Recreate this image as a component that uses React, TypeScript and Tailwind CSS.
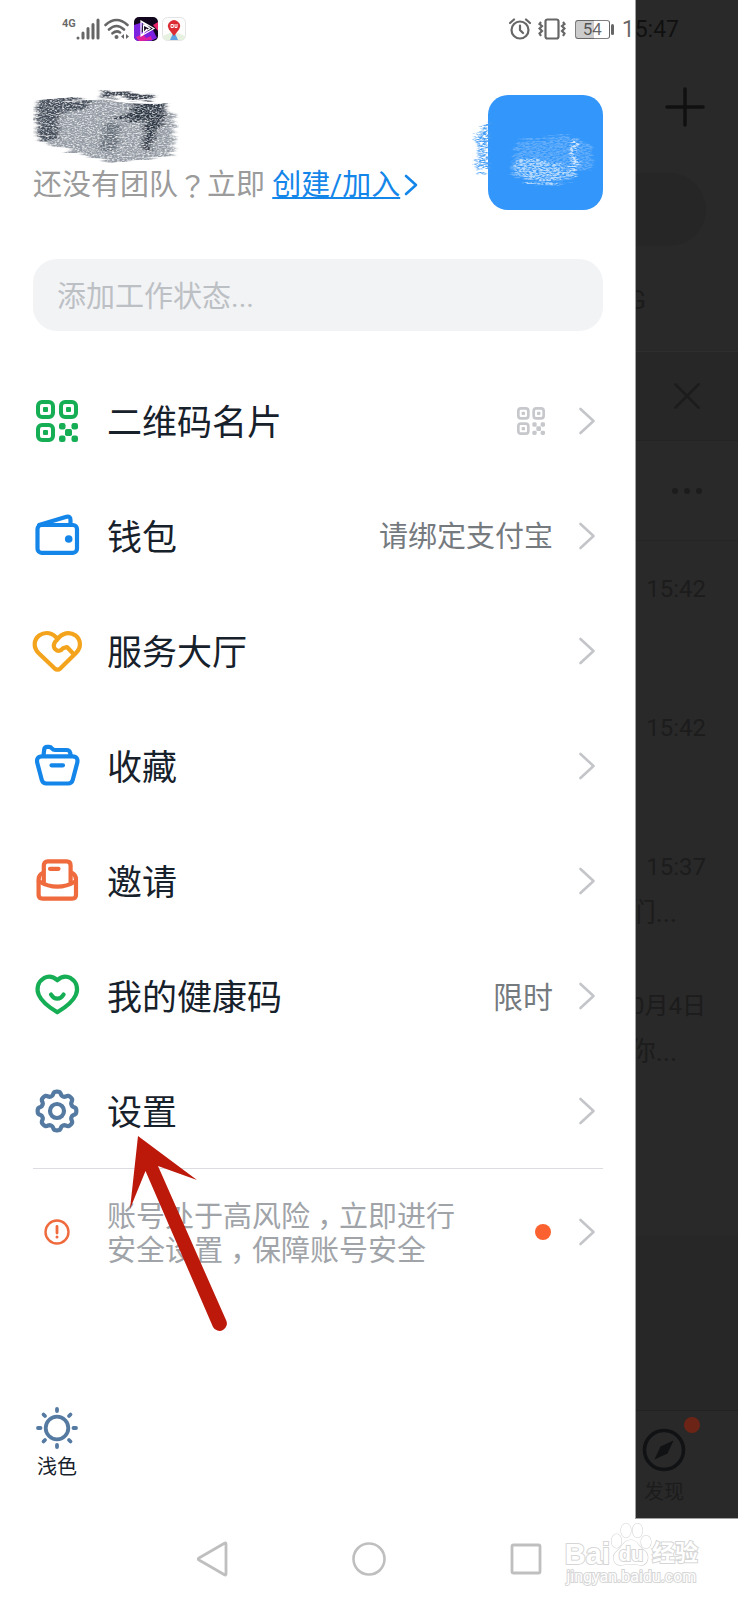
import React from 'react';

type IconProps = { className?: string };

const round = (n: number) => Math.round(n * 100) / 100;

// eight soft teeth around the centre of a 48 box
const gearPath =
  Array.from({ length: 128 }, (_, i) => {
    const a = (i / 128) * Math.PI * 2;
    const r = 17.5 + 1.9 * Math.tanh(1.8 * Math.cos(8 * a) + 0.3);
    return `${i ? 'L' : 'M'}${round(24 + r * Math.cos(a))} ${round(24 + r * Math.sin(a))}`;
  }).join('') + 'Z';

function Line({ className, children }: { className: string; children: React.ReactNode }) {
  return (
    <svg viewBox="0 0 48 48" className={`size-12 shrink-0 overflow-visible ${className}`} fill="none" stroke="currentColor" strokeWidth="4.2" strokeLinecap="round" strokeLinejoin="round">
      {children}
    </svg>
  );
}

function QrIcon({ className }: IconProps) {
  return (
    <svg viewBox="0 0 42 42" className={className} fill="currentColor">
      {[[0, 0], [23, 0], [0, 23]].map(([x, y]) => (
        <g key={`${x}-${y}`}>
          <rect x={x + 2} y={y + 2} width="15" height="15" rx="4" fill="none" stroke="currentColor" strokeWidth="4" />
          <rect x={x + 7} y={y + 7} width="5" height="5" rx="1" />
        </g>
      ))}
      <rect x="23" y="23" width="6.5" height="6.5" rx="2.2" />
      <rect x="35.5" y="23" width="6.5" height="6.5" rx="2.2" />
      <rect x="29" y="29" width="7" height="7" rx="1.8" />
      <rect x="23" y="35.5" width="6.5" height="6.5" rx="2.2" />
      <rect x="35.5" y="35.5" width="6.5" height="6.5" rx="2.2" />
    </svg>
  );
}

function Chevron() {
  return (
    <svg viewBox="0 0 32 32" className="size-8 shrink-0 text-[#c3c5c9]" fill="none" stroke="currentColor" strokeWidth="2.6" strokeLinecap="round" strokeLinejoin="round">
      <path d="M9.5 4 22.5 16 9.5 28" />
    </svg>
  );
}

const items = [
  {
    label: '二维码名片',
    icon: (
      <span className="flex size-12 shrink-0 items-center justify-center">
        <QrIcon className="size-[42px] text-[#16ae55]" />
      </span>
    ),
    extra: <QrIcon className="mr-2 size-7 text-[#c6c8cb]" />,
  },
  {
    label: '钱包',
    icon: (
      <Line className="text-[#1486ea]">
        <rect x="4.5" y="13" width="39.5" height="27.8" rx="4" />
        <path d="M6 13 33.5 4.8Q37.5 4 37.5 8V13" />
        <circle cx="35.7" cy="27" r="3.8" fill="currentColor" stroke="none" />
      </Line>
    ),
    extra: <span className="pt-1 text-[29px] text-[#757a7f]">请绑定支付宝</span>,
  },
  {
    label: '服务大厅',
    icon: (
      <Line className="text-[#f3a41c]">
        <path d="M24.5 12.3C20.5 5.8 12.5 4.2 6.5 8.2C.3 12.8.2 20.5 5.5 26L21.5 41.3Q24.5 43.9 27.5 41.3L43 26C48.5 20.5 48.2 12.8 42.2 8.2C36.5 4.2 29 6 24.5 12.3C20.5 15.5 19.7 19.5 22.3 22.2C25 24.8 28 24 30 21.3L34 20 40.5 27" />
      </Line>
    ),
  },
  {
    label: '收藏',
    icon: (
      <Line className="text-[#1486ea]">
        <path d="M9 14.3H39.5C43.5 14.3 45.2 17 44.2 21L39.7 38Q38.7 41.5 35 41.5H13.5Q9.8 41.5 8.8 38L4.3 21C3.3 17 5 14.3 9 14.3Z" />
        <path d="M10.5 13.5 11.2 7.5Q11.5 4.8 14.2 4.8H16Q17.8 4.8 19 6.4T22 8H33.5Q36.7 8 37.2 11L37.7 13.5M18.5 23.3H30" />
      </Line>
    ),
  },
  {
    label: '邀请',
    icon: (
      <Line className="text-[#ef6a3d]">
        <path d="M10.8 25V8.4Q10.8 4.4 14.8 4.4H33.6Q37.6 4.4 37.6 8.4V25" />
        <path d="M9.5 16Q5.6 18 5.6 22.5V38Q5.6 41.6 9.6 41.6H39.2Q43 41.6 43 38V22.5Q43 18 39 16" />
        <path d="M5.8 24.2Q24.3 35.2 42.8 24.2M17 11.8H25.5" />
      </Line>
    ),
  },
  {
    label: '我的健康码',
    icon: (
      <Line className="text-[#16ae55]">
        <path d="M24.3 8.2C20.3 4.6 15 4 10.8 6.2C4.6 9.8 3.2 17 5.8 23C8.8 29.8 15.5 35 24.3 40.3C33.1 35 39.8 29.8 42.8 23C45.4 17 44 9.8 37.8 6.2C33.6 4 28.3 4.6 24.3 8.2Z" />
        <path d="M18 22.5Q20.5 26.7 24.3 26.7T30.6 22.5" />
      </Line>
    ),
    extra: <span className="pt-1 text-[30px] text-[#757a7f]">限时</span>,
  },
  {
    label: '设置',
    icon: (
      <Line className="text-[#557aa2]">
        <path d={gearPath} />
        <circle cx="24" cy="24" r="7" />
      </Line>
    ),
  },
];

const chats = [
  { time: '15:42' },
  { time: '15:42' },
  { time: '15:37', preview: '们...' },
  { time: '0月4日', preview: '你...' },
  {},
];

// half-width comma centred in a full-width cell
function Comma() {
  return <span className="inline-block w-[29px] text-center [font-feature-settings:'halt']">，</span>;
}

function StatusBar() {
  return (
    <header className="pointer-events-none absolute inset-x-0 top-0 z-10 flex h-[58px] items-center justify-between pl-[62px] pr-[59px] text-black/60">
      <div className="flex items-center">
        <div className="flex items-start">
          <span className="text-[11px] font-bold leading-3">4G</span>
          <svg viewBox="0 0 24 22" className="h-[22px] w-6" stroke="currentColor" strokeWidth="3" strokeLinecap="round">
            <path d="M2 20V20M7 20V15M12 20V10.5M17 20V6.5M22 20V2" />
          </svg>
        </div>
        <svg viewBox="0 0 25 22" className="ml-1 h-[22px] w-[25px]" fill="none" stroke="currentColor" strokeWidth="2.6" strokeLinecap="round">
          <path d="M1.5 7Q12.5-3 23.5 7M5 11.5Q12.5 4.5 20 11.5M8.5 15.3Q12.5 12 16 14.5" />
          <circle cx="12.5" cy="19" r="2" fill="currentColor" stroke="none" />
          <path d="M20 16v5l-3-2.5zM22 16v5l3-2.5z" fill="currentColor" stroke="none" />
        </svg>
        <svg viewBox="0 0 24 24" className="ml-[5px] size-6">
          <rect width="24" height="24" rx="5" fill="#12061f" />
          <path d="M0 8 9 5 7 15 19 13 23 21 17 24H5Q0 24 0 19Z" fill="#7a22e0" />
          <path d="M2 20 9 17 12 21 17 19 18 23 8 24H5Z" fill="#e0219b" />
          <path d="M19 8 24 5V14Z" fill="#e8246a" />
          <path d="M7 4V19L20 11.5ZM9.5 8V15.5L16 11.5ZM7 4 16 11.5M7 19 13 12" fill="none" stroke="#fff" strokeWidth="1.2" />
        </svg>
        <svg viewBox="0 0 24 24" className="ml-1 size-6">
          <rect x=".5" y=".5" width="23" height="23" rx="5" fill="#fdfdfd" stroke="#e2e4e6" />
          <path d="M1 19 10 15 16 16 23 19Q23 23 19 23H5Q1 23 1 19Z" fill="#e6f1df" />
          <path d="M8 23 11.2 16H12.8L16 23Z" fill="#5d9fe0" />
          <path d="M12 19 7 12.5A6 6 0 1 1 17 12.5Z" fill="#dc2c33" />
          <path d="M9 7.5h2.3v3H9zM13 7v3.5h2V7" fill="none" stroke="#fff" />
        </svg>
      </div>
      <div className="flex items-center">
        <svg viewBox="0 0 22 22" className="size-[22px]" fill="none" stroke="currentColor" strokeWidth="2.2" strokeLinecap="round">
          <circle cx="11" cy="12" r="8.5" />
          <path d="M11 7.5V12L14 15M1 5 5 1.5M21 5 17 1.5" />
        </svg>
        <svg viewBox="0 0 28 22" className="ml-[7px] h-[22px] w-7" fill="none" stroke="currentColor" strokeWidth="2.2">
          <rect x="7.5" y="1.5" width="13" height="19" rx="2" />
          <path d="M3 4 1.5 6 4 8 1.5 10.5 4 13 1.5 15.5 3 18M25 4 26.5 6 24 8 26.5 10.5 24 13 26.5 15.5 25 18" />
        </svg>
        <div className="ml-[9px] flex items-center">
          <div className="flex h-[19px] w-[35px] items-center justify-center rounded-[3px] border border-black/50 bg-linear-to-r from-black/20 from-55% to-transparent to-55% text-[17px] leading-none">54</div>
          <span className="ml-px h-[11px] w-[3px] rounded-sm bg-black/60" />
        </div>
        <span className="ml-2 text-[23px] leading-none">15:47</span>
      </div>
    </header>
  );
}

function NameScribble() {
  return (
    <svg viewBox="33 86 146 78" className="h-[78px] w-[146px]" fill="none">
      <filter id="pencil" x="-10%" y="-20%" width="120%" height="140%">
        <feTurbulence type="fractalNoise" baseFrequency="0.4 0.9" numOctaves="2" seed="4" result="n" />
        <feColorMatrix in="n" type="matrix" values="0 0 0 0 0 0 0 0 0 0 0 0 0 0 0 2.2 0 0 0 -0.3" result="m" />
        <feTurbulence type="fractalNoise" baseFrequency="0.03 0.3" numOctaves="2" seed="7" result="w" />
        <feDisplacementMap in="SourceGraphic" in2="w" scale="12" xChannelSelector="R" yChannelSelector="A" result="d" />
        <feGaussianBlur in="d" stdDeviation="2 0.6" result="b" />
        <feComposite in="b" in2="m" operator="in" />
      </filter>
      <g filter="url(#pencil)">
        <path d="M39 99 99 97 113 100 166 101 166 110 175 112 173 153 160 157 112 161 78 152 39 140 36 108Z" fill="#949ba4" />
        <path d="M102 89 152 93 152 99 102 97Z" fill="#3c4551" />
        <path d="M40 99 94 97 85 107 60 112 57 138 38 141 36 107Z" fill="#454e5a" />
        <path d="M134 101 166 101 165 121 157 128 151 152 143 148 145 121 102 117 130 111Z" fill="#2d3744" />
        <path d="M105 121 121 124 115 153 99 149Z" fill="#68717b" />
      </g>
    </svg>
  );
}

function Avatar() {
  return (
    <button aria-label="头像" className="relative mt-2 size-[115px] shrink-0 rounded-[20px] bg-[#3296fa]">
      <svg viewBox="472 95 131 115" className="absolute -left-4 top-0 h-[115px] w-[131px]">
        <filter id="chalk" x="-10%" y="-20%" width="120%" height="140%">
          <feTurbulence type="fractalNoise" baseFrequency="0.3 0.8" numOctaves="2" seed="9" result="n" />
          <feColorMatrix in="n" type="matrix" values="0 0 0 0 0 0 0 0 0 0 0 0 0 0 0 3 0 0 0 -0.9" result="m" />
          <feTurbulence type="fractalNoise" baseFrequency="0.03 0.35" numOctaves="2" seed="3" result="w" />
          <feDisplacementMap in="SourceGraphic" in2="w" scale="14" xChannelSelector="R" yChannelSelector="A" result="d" />
          <feGaussianBlur in="d" stdDeviation="1 0.4" result="b" />
          <feComposite in="b" in2="m" operator="in" />
        </filter>
        <g filter="url(#chalk)">
          <path d="M489 120 484 126 474 138 480 150 475 173 489 171Z" fill="#4a9ff5" />
          <path d="M516 140 575 135 593 148 592 169 573 170 573 181 535 186 534 180 514 179 512 166Z" fill="#65aefb" />
          <path d="M516 161 536 158 560 166 574 170 574 177 537 184 516 176Z" fill="#b8dafd" />
          <path d="M572 140H577V169H570Z" fill="#d8ebff" />
        </g>
      </svg>
    </button>
  );
}

function Drawer() {
  return (
    <aside className="min-w-0 flex-1 bg-white pl-[33px] pr-8 text-[#17212b]">
      <div className="flex items-start justify-between pt-[87px]">
        <div>
          <NameScribble />
          <p className="flex items-center whitespace-pre pt-[2px] text-[29px] leading-9 text-[#9b9b9b]">
            还没有团队<span className="font-['Noto_Sans_CJK_TC']">？</span>立即{' '}
            <a href="#team" className="flex items-center text-[#1486ea]">
              <span className="underline decoration-2 underline-offset-2">创建/加入</span>
              <svg viewBox="0 0 14 22" className="ml-1 h-[22px] w-[14px]" fill="none" stroke="currentColor" strokeWidth="2.6" strokeLinecap="round" strokeLinejoin="round">
                <path d="M2 2 12 11 2 20" />
              </svg>
            </a>
          </p>
        </div>
        <Avatar />
      </div>

      <input
        aria-label="工作状态"
        placeholder="添加工作状态..."
        className="mt-[49px] block h-[72px] w-full rounded-3xl bg-[#f2f3f5] px-6 pt-1 text-[29px] placeholder:text-[#bcc0c4] placeholder:opacity-100"
      />

      <nav className="mt-8 border-b border-[#dcdde0]">
        {items.map((item) => (
          <button key={item.label} className="flex h-[115px] w-full items-center text-left">
            {item.icon}
            <span className="ml-[26px] flex-1 pt-2 text-[35px]">{item.label}</span>
            {item.extra}
            <span className="ml-[18px]"><Chevron /></span>
          </button>
        ))}
      </nav>

      <button className="flex h-[126px] w-full items-center text-left">
        <svg viewBox="0 0 48 48" className="size-12 shrink-0 text-[#ef6a3d]" fill="none" stroke="currentColor" strokeWidth="2.4" strokeLinecap="round">
          <circle cx="24" cy="24" r="11.5" />
          <path d="M24 18.5V25" strokeWidth="2.8" />
          <circle cx="24" cy="29" r="1.5" fill="currentColor" stroke="none" />
        </svg>
        <span className="ml-[26px] flex-1 pt-1 text-[29px] leading-[34px] text-[#a0a4a9]">
          账号处于高风险<Comma />立即进行
          <br />
          安全设置<Comma />保障账号安全
        </span>
        <span className="size-4 rounded-full bg-[#fb6230]" />
        <span className="ml-5"><Chevron /></span>
      </button>

      <button className="mb-[38px] mt-[112px] flex w-12 flex-col items-center">
        <svg viewBox="0 0 42 42" className="size-[42px] text-[#557aa2]" fill="none" stroke="currentColor" strokeWidth="3.8" strokeLinecap="round">
          <circle cx="21" cy="21" r="11.3" />
          <path d="M21 2V4M21 38V40M2 21H4.5M37.5 21H40M7.5 7.5 9 9M33 33 34.5 34.5M34.5 7.5 33 9M9 33 7.5 34.5" />
        </svg>
        <span className="mt-1 whitespace-nowrap text-[20px] leading-7">浅色</span>
      </button>
    </aside>
  );
}

function DimmedPage() {
  return (
    <section className="flex w-[103px] shrink-0 flex-col overflow-hidden border-b border-l border-neutral-400 bg-[#292929] text-[#1c1c1c]">
      <div className="flex h-[173px] items-end pb-[46px] pl-[29px]">
        <button aria-label="新建">
          <svg viewBox="0 0 40 40" className="size-10 text-[#101010]" stroke="currentColor" strokeWidth="3.5" strokeLinecap="round">
            <path d="M20 2V38M2 20H38" />
          </svg>
        </button>
      </div>
      <div className="mr-8 h-[73px] rounded-r-full bg-[#262626]" />
      <div className="flex h-[106px] items-center justify-end border-b border-[#2e2e2e] pr-[92px] pt-1 text-[26px]">G</div>
      <div className="flex h-[89px] items-center border-b border-[#242424] bg-[#272727] pl-9">
        <button aria-label="关闭">
          <svg viewBox="0 0 30 30" className="size-[30px]" stroke="currentColor" strokeWidth="2.6" strokeLinecap="round">
            <path d="M3.5 3.5 26.5 26.5M26.5 3.5 3.5 26.5" />
          </svg>
        </button>
      </div>
      <div className="flex h-[100px] items-center gap-[6px] border-b border-[#252525] pl-9">
        <span className="size-[6px] rounded-full bg-[#1c1c1c]" />
        <span className="size-[6px] rounded-full bg-[#1c1c1c]" />
        <span className="size-[6px] rounded-full bg-[#1c1c1c]" />
      </div>
      {chats.map((chat, i) => (
        <div key={i} className="flex h-[139px] flex-col pt-[30px]">
          <div className="flex justify-end whitespace-nowrap pr-8 text-[24px] leading-9">{chat.time}</div>
          <div className="mt-[10px] flex justify-end whitespace-nowrap pr-[61px] text-[27px] leading-9">{chat.preview}</div>
        </div>
      ))}
      <div className="h-[175px] border-b border-[#222] bg-[#272727]" />
      <div className="flex flex-1 flex-col items-start pl-[6px] pt-[17px]">
        <button className="relative flex flex-col items-center">
          <svg viewBox="0 0 44 44" className="size-11 text-[#101214]" fill="none" stroke="currentColor" strokeWidth="3.6">
            <circle cx="22" cy="22" r="19.5" />
            <path d="M31.5 12.5 25.5 25.5 12.5 31.5 18.5 18.5Z" fill="currentColor" stroke="none" />
          </svg>
          <span className="absolute -right-[14px] -top-[11px] size-4 rounded-full bg-[#6b2415]" />
          <span className="mt-[6px] text-[20px] leading-7">发现</span>
        </button>
      </div>
    </section>
  );
}

function Watermark() {
  return (
    <div className="absolute bottom-[14px] right-10 flex flex-col items-center whitespace-nowrap text-white [-webkit-text-stroke:2px_#d6d6d6] [paint-order:stroke]">
      <div className="flex items-end">
        <span className="font-['Liberation_Sans'] text-[29px] font-bold leading-7">Bai</span>
        <span className="relative flex">
          <svg viewBox="0 0 42 46" className="h-[46px] w-[42px]" fill="#fff" stroke="#d6d6d6" strokeWidth="1.2">
            <ellipse cx="6.5" cy="19" rx="5" ry="7" />
            <ellipse cx="16" cy="8.5" rx="5" ry="7" />
            <ellipse cx="27.5" cy="8.5" rx="5" ry="7" />
            <ellipse cx="36" cy="20" rx="5" ry="6.5" />
            <path d="M21 18C28 18 29 26 35 29C40 34 38 44 30 43C24 41.5 18 41.5 12 43C4 44 1 35 6 30C12 26 13 18 21 18Z" />
          </svg>
          <span className="absolute inset-x-0 bottom-0 text-center font-['Liberation_Sans'] text-[20px] font-bold leading-7">du</span>
        </span>
        <span className="text-[23px] font-bold leading-7">经验</span>
      </div>
      <span className="text-[16px] leading-[17px]">jingyan.baidu.com</span>
    </div>
  );
}

export default function App() {
  return (
    <div className="relative bg-white font-['Roboto','Noto_Sans_CJK_SC',sans-serif]">
      <StatusBar />
      <main className="flex">
        <Drawer />
        <DimmedPage />
      </main>

      <footer className="flex h-20 items-center justify-center gap-[117px] text-[#bfbfbf]">
        <button aria-label="返回">
          <svg viewBox="0 0 40 40" className="size-10" fill="none" stroke="currentColor" strokeWidth="2.8" strokeLinejoin="round">
            <path d="M34 5V35Q34 36.5 32.5 35.7L7 21Q5.5 20 7 19L32.5 4.3Q34 3.5 34 5Z" />
          </svg>
        </button>
        <button aria-label="主页">
          <svg viewBox="0 0 40 40" className="size-10" fill="none" stroke="currentColor" strokeWidth="2.6">
            <circle cx="20" cy="20" r="15.5" />
          </svg>
        </button>
        <button aria-label="最近任务">
          <svg viewBox="0 0 40 40" className="size-10" fill="none" stroke="currentColor" strokeWidth="2.8">
            <rect x="6" y="6" width="28" height="28" rx="1.5" />
          </svg>
        </button>
      </footer>

      {/* pointer to the settings row */}
      <svg viewBox="126 1130 110 210" className="pointer-events-none absolute left-[126px] top-[1130px] h-[210px] w-[110px]" fill="#bd190b">
        <path d="M138 1136 197 1180 158 1166 226 1320A7 7 0 0 1 213 1327L145.5 1171 130 1209Z" />
      </svg>
      <Watermark />
    </div>
  );
}
